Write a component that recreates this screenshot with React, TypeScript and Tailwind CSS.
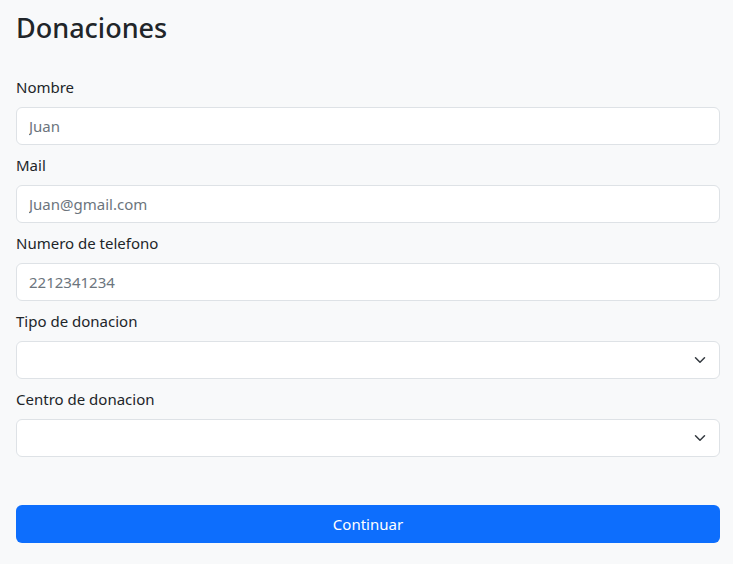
const fields = [
  { label: "Nombre", placeholder: "Juan" },
  { label: "Mail", placeholder: "Juan@gmail.com" },
  { label: "Numero de telefono", placeholder: "2212341234" },
];

const selects = ["Tipo de donacion", "Centro de donacion"];

const Chevron = () => (
  <svg
    viewBox="0 0 16 16"
    className="pointer-events-none absolute right-3 top-1/2 h-3 w-4 -translate-y-1/2"
    preserveAspectRatio="xMidYMid meet"
  >
    <path
      d="m2 5 6 6 6-6"
      fill="none"
      stroke="#343a40"
      strokeWidth="2"
      strokeLinecap="round"
      strokeLinejoin="round"
    />
  </svg>
);

export default function App() {
  return (
    <div className="min-h-screen bg-[#f8f9fa] pl-4 pr-[13px] pt-[11px] text-[#212529] [font-family:'Noto_Sans',sans-serif]">
      <h2 className="mb-2 text-[27px] font-medium leading-[34px]">Donaciones</h2>
      <form className="pt-[22px]" onSubmit={(e) => e.preventDefault()}>
        {fields.map((f) => (
          <div key={f.label} className="mb-2">
            <label className="mb-2 block text-[15px] leading-6">{f.label}</label>
            <input
              placeholder={f.placeholder}
              className="block h-[38px] w-full rounded-md border border-[#dee2e6] bg-white px-3 text-[15px] placeholder:text-[#6c757d] focus:outline-none"
            />
          </div>
        ))}
        {selects.map((s) => (
          <div key={s} className="mb-2">
            <label className="mb-2 block text-[15px] leading-6">{s}</label>
            <div className="relative">
              <select className="block h-[38px] w-full appearance-none rounded-md border border-[#dee2e6] bg-white px-3 text-[15px] focus:outline-none">
                <option value=""></option>
              </select>
              <Chevron />
            </div>
          </div>
        ))}
        <button
          type="submit"
          className="mt-10 h-[38px] w-full rounded-md bg-[#0d6efd] text-[15px] text-white"
        >
          Continuar
        </button>
      </form>
    </div>
  );
}
